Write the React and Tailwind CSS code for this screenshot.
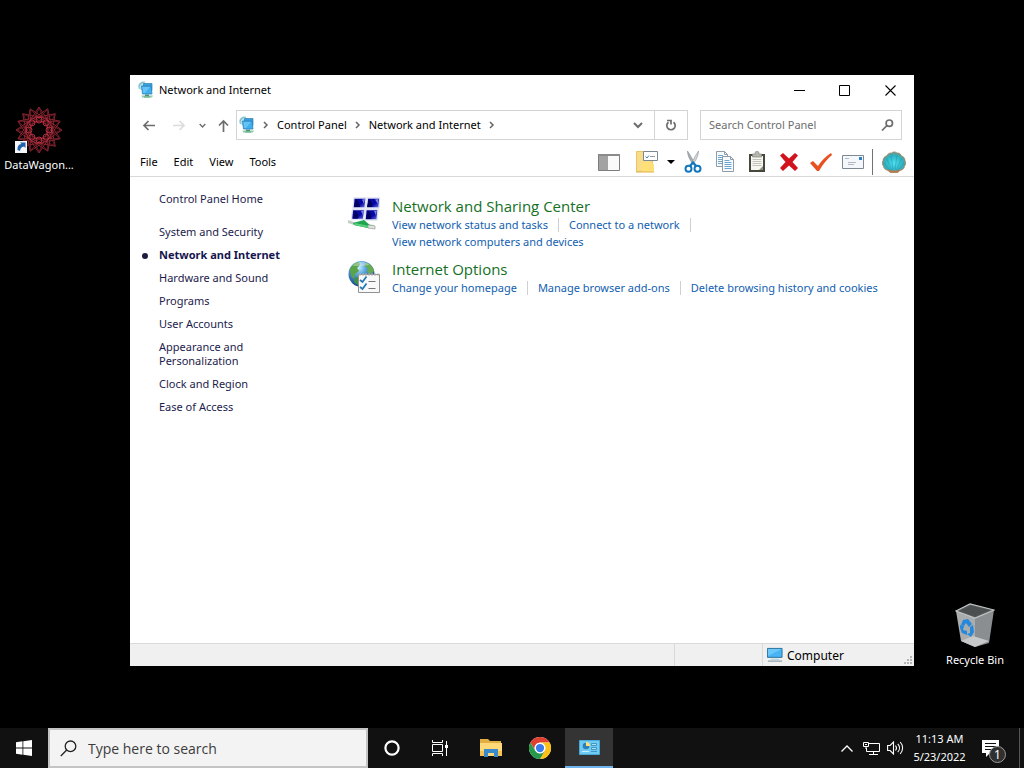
import React from "react";

const categories = [
  "System and Security",
  "Network and Internet",
  "Hardware and Sound",
  "Programs",
  "User Accounts",
  "Appearance and Personalization",
  "Clock and Region",
  "Ease of Access",
];

const sections = [
  {
    title: "Network and Sharing Center",
    icon: <NetworkCenterIcon />,
    rows: [
      ["View network status and tasks", "Connect to a network", ""],
      ["View network computers and devices"],
    ],
  },
  {
    title: "Internet Options",
    icon: <InternetOptionsIcon />,
    rows: [["Change your homepage", "Manage browser add-ons", "Delete browsing history and cookies"]],
  },
];

function NetworkIcon() {
  return (
    <svg width="16" height="18" viewBox="0 0 16 18" className="shrink-0" aria-hidden="true">
      <circle cx="4.500" cy="5" r="4.300" fill="#b5dfeb" />
      <path d="M1 5c1-3 3-4 6-4M1.500 8c-1-2 0-5 3-7" stroke="#6fb2c4" strokeWidth=".8" fill="none" />
      <path d="M5.500 2.500h8.500v7h-8.500z" fill="#3a9fdb" stroke="#2980b5" strokeWidth=".7" />
      <path d="M3.500 5h9.500l1 8H4.500z" fill="#3eaeee" stroke="#2c83b7" strokeWidth=".8" />
      <path d="M4.500 6H12l-5 6H5.200z" fill="#66c3f6" />
      <path d="M3.500 14.500H15l-1 2H4z" fill="#8fceae" />
      <path d="M7 13.500h4v1.500H7z" fill="#4f8d80" />
      <path d="M6 15.500h6v1H6z" fill="#5aa67d" />
    </svg>
  );
}

function NetworkCenterIcon() {
  return (
    <svg width="34" height="34" viewBox="0 0 34 34" aria-hidden="true">
      <defs>
        <linearGradient id="screen" x1="0" y1="0" x2="1" y2="1">
          <stop offset="0" stopColor="#0a0a8e" />
          <stop offset=".6" stopColor="#0707a8" />
          <stop offset="1" stopColor="#7d86e8" />
        </linearGradient>
      </defs>
      <g stroke="#dfe3f2" strokeWidth="1.300">
        <path d="M6 1h12l-1 10H5z" fill="url(#screen)" />
        <path d="M19.500 1h12l-.5 10H18.500z" fill="url(#screen)" />
        <path d="M4.500 12.500h12l-1 10h-12z" fill="url(#screen)" />
        <path d="M18 12.500h12l-1 10.500H17z" fill="url(#screen)" />
      </g>
      <path d="M8 2l3 4 1 4H6zM21 2l3 4v4h-5zM7 13.500l3 4v4H5zM20 13.500l3 4v4.500h-5z" fill="#00005f" />
      <path d="M14 2.500l3-.5-1 5zM27 2.500l3-.5v5zM13 14l3-.5-1 5zM26 14l3-.5-1 5z" fill="#7983e6" />
      <path d="M0 23l6 2 20 3v4l-7-1-13-3-6-2z" fill="#c4cdc7" />
      <path d="M5 26l11-3 7 6-3 2-14-3z" fill="#1fa44f" />
      <path d="M7 26l14 3v2L6 28z" fill="#58cf7d" />
      <path d="M20 28l7 1v3l-7-1z" fill="#e2e5e3" stroke="#92a098" strokeWidth=".7" />
    </svg>
  );
}

function InternetOptionsIcon() {
  return (
    <svg width="34" height="34" viewBox="0 0 34 34" aria-hidden="true">
      <defs>
        <radialGradient id="globe" cx=".4" cy=".25" r=".75">
          <stop offset="0" stopColor="#c7edff" />
          <stop offset=".35" stopColor="#5aa7dc" />
          <stop offset="1" stopColor="#153f88" />
        </radialGradient>
      </defs>
      <circle cx="13.500" cy="14" r="13" fill="url(#globe)" />
      <path d="M2 9c3-5 6-7 9-7l1 3-3 3 2 3-4 3-1 5-3-3z" fill="#5aa346" />
      <path d="M17 3c4 0 8 3 9 8l-3 3-4-2 1-4-3-1z" fill="#66ab50" />
      <path d="M7 17l6 1 1 8c-3 0-6-2-8-4z" fill="#3f9146" />
      <path d="M4.500 6c4-5 12-6 17-1-5 1-12 1-17 1z" fill="#fff" opacity=".35" />
      <path d="M10.500 14.500h21v18h-21z" fill="#f9f9f9" stroke="#929292" />
      <path d="M12 13v3M15 13v3M18 13v3M21 13v3M24 13v3M27 13v3M30 13v3" stroke="#b5b5b5" />
      <path d="M12 20l2.500 2 4-5.500M12 27l2.500 2 4-5.500" fill="none" stroke="#2479b5" strokeWidth="1.800" />
      <path d="M20.500 21.500h7M20.500 28.500h7" stroke="#777" />
    </svg>
  );
}

function PaneIcon() {
  return (
    <svg width="22" height="17" viewBox="0 0 22 17" aria-hidden="true">
      <path d="M.5.500h21v16H.5z" fill="#fafafa" stroke="#7d7d7d" />
      <path d="M1 1h9v15H1z" fill="#a3a3a3" />
      <path d="M0 1h22" stroke="#8a8a8a" strokeWidth="2" />
    </svg>
  );
}

function FolderOptionsIcon() {
  return (
    <svg width="22" height="22" viewBox="0 0 22 22" aria-hidden="true">
      <path d="M.5.500h7l1 2h8v18H.5z" fill="#f7dc8b" stroke="#e9c563" />
      <path d="M5.500 11h10l2.500 2.500V21h-12.500z" fill="#ffdf78" />
      <path d="M0 21h18" stroke="#dfb24a" />
      <path d="M7.500.500h14v9h-14z" fill="#fff" stroke="#7c8790" />
      <path d="M9.500 5.500l1.500 1.500L13 4.500" stroke="#3d86be" fill="none" />
      <path d="M14 5.500h5" stroke="#999" />
    </svg>
  );
}

function CutIcon() {
  return (
    <svg width="18" height="22" viewBox="0 0 18 22" aria-hidden="true">
      <path d="M3.500 0c0 4 2 9 5.500 13l1-2C8 7 6 4 3.500 0z" fill="#a7adb2" stroke="#858c92" strokeWidth=".6" />
      <path d="M14.500 0c0 4-2 9-5.500 13l-1-2c2-4 4-7 6.500-11z" fill="#d2d6d9" stroke="#8d9499" strokeWidth=".6" />
      <ellipse cx="4.500" cy="17.800" rx="3" ry="3" fill="none" stroke="#1477bd" strokeWidth="2" />
      <ellipse cx="13.500" cy="17.800" rx="3" ry="3" fill="none" stroke="#1477bd" strokeWidth="2" />
      <path d="M5.500 15.500L9 11.500l3.500 4" fill="none" stroke="#1477bd" strokeWidth="2.400" />
    </svg>
  );
}

function CopyIcon() {
  return (
    <svg width="20" height="22" viewBox="0 0 20 22" aria-hidden="true">
      <g fill="#f8fbfd" stroke="#8f9ca7">
        <path d="M1.500.500h8l3 3v12h-11z" />
        <path d="M7.500 5.500h8l3 3v12h-11z" />
      </g>
      <path d="M9.500.500v3h3M15.500 5.500v3h3" fill="none" stroke="#8f9ca7" />
      <path d="M3 4.500h5M3 6.500h4M3 8.500h4M3 10.500h4M3 12.500h4M9.500 9.500h5M9.500 11.500h7M9.500 13.500h7M9.500 15.500h7M9.500 17.500h7" stroke="#6ba5d2" />
    </svg>
  );
}

function PasteIcon() {
  return (
    <svg width="18" height="22" viewBox="0 0 18 22" aria-hidden="true">
      <path d="M1 3h16v18H1z" fill="#48473c" />
      <path d="M3 5h12v14H3z" fill="#f7f7f2" />
      <path d="M4.500 3H7c0-4 4-4 4 0h2.500v3h-9z" fill="#b5b6ae" stroke="#85867e" strokeWidth=".7" />
      <path d="M4.500 8.500h9M4.500 10.500h9M4.500 12.500h9M4.500 14.500h9" stroke="#c4c4bc" />
      <path d="M11 19l4-4v4z" fill="#8d8d83" />
    </svg>
  );
}

function DeleteIcon() {
  return (
    <svg width="20" height="20" viewBox="0 0 20 20" aria-hidden="true">
      <path d="M1 3.500L4 1l6 5.500L16 1l3 2.500-5.500 6.500 5.500 6-3 3-6-5.500L4 19l-3-3 5.500-6z" fill="#d2131d" />
    </svg>
  );
}

function CheckIcon() {
  return (
    <svg width="22" height="18" viewBox="0 0 22 18" aria-hidden="true">
      <path d="M0 10l3-2 5 5C11 8 15 4 21 0l1 2C17 6 13 11 9 18H7z" fill="#e8501f" />
    </svg>
  );
}

function MailIcon() {
  return (
    <svg width="22" height="14" viewBox="0 0 22 14" aria-hidden="true">
      <path d="M.5.500h21v13H.5z" fill="#f5f8fa" stroke="#7d8992" />
      <path d="M3 3.500h4M6 7.500h8M6 9.500h6" stroke="#b0bac2" />
      <path d="M17 2h3v3h-3z" fill="#2d83c5" />
    </svg>
  );
}

function ShellIcon() {
  return (
    <svg width="24" height="22" viewBox="0 0 24 22" aria-hidden="true">
      <defs>
        <radialGradient id="shell" cx=".5" cy=".55" r=".6">
          <stop offset="0" stopColor="#4fe0f2" />
          <stop offset=".6" stopColor="#2fb4c4" />
          <stop offset=".85" stopColor="#5f9c93" />
          <stop offset="1" stopColor="#b07a4c" />
        </radialGradient>
      </defs>
      <path d="M6 19.500C3 19 1.500 17 1.500 15 0 14-.2 11 1 9.500 1 7 2.500 5.500 4.500 5 5.500 3 7.500 1.500 9.500 2 11 .5 13.500.5 15 2c2-.3 4 1 4.500 3 2 .5 3.500 2 3.500 4.500 1.200 1.500 1 4.500-.5 5.500 0 2-1.500 4-4.500 4.500l-2.500 2h-7z" fill="url(#shell)" stroke="#b08059" strokeWidth=".7" />
      <path d="M11 19L9 4M13 19l2-15M9.500 19L4.500 7M14.500 19l5-12M8 19l-6-7M16 19l6-7" stroke="#1b93a6" strokeWidth=".8" opacity=".55" />
      <path d="M5 18l3 3.500h8l3-3.500-4 1.500H9z" fill="#b87a4a" />
    </svg>
  );
}

function Arrow({ direction }) {
  const paths = {
    left: "M13 6.500H2M6.500 2L2 6.500 6.500 11",
    right: "M0 6.500h11M6.500 2L11 6.500 6.500 11",
    up: "M6.500 13V2M2 6.500L6.500 2 11 6.500",
  };
  return (
    <svg width="13" height="13" viewBox="0 0 13 13" fill="none" stroke="currentColor" strokeWidth="1.700" aria-hidden="true">
      <path d={paths[direction]} />
    </svg>
  );
}

function ChevronDown({ size }) {
  return (
    <svg width={size} height={size} viewBox="0 0 10 10" fill="none" stroke="currentColor" strokeWidth="2" aria-hidden="true">
      <path d="M1 3l4 4 4-4" />
    </svg>
  );
}

function ChevronRight() {
  return (
    <svg width="6" height="8" viewBox="0 0 6 8" fill="none" stroke="#666" strokeWidth="1.500" className="shrink-0" aria-hidden="true">
      <path d="M1 1l3 3-3 3" />
    </svg>
  );
}

const tools = [
  ["Cut", CutIcon],
  ["Copy", CopyIcon],
  ["Paste", PasteIcon],
  ["Delete", DeleteIcon],
  ["Properties", CheckIcon],
  ["E-mail", MailIcon],
];

function ControlPanelWindow() {
  return (
    <section className="absolute top-[75px] right-[110px] bottom-[62px] left-[130px] flex flex-col bg-white text-[11px] text-black">
      <header className="flex h-[30px] shrink-0 items-center pl-2">
        <NetworkIcon />
        <h1 className="ml-[5px] flex-1">Network and Internet</h1>
        <button aria-label="Minimize" className="flex h-full w-[45px] items-center justify-center">
          <svg width="11" height="11" stroke="#000" aria-hidden="true"><path d="M0 5.500h11" /></svg>
        </button>
        <button aria-label="Maximize" className="flex h-full w-[45px] items-center justify-center">
          <svg width="11" height="11" fill="none" stroke="#000" aria-hidden="true"><path d="M.5.500h10v10H.5z" /></svg>
        </button>
        <button aria-label="Close" className="flex h-full w-[47px] items-center justify-center">
          <svg width="11" height="11" stroke="#000" strokeWidth="1.100" aria-hidden="true"><path d="M.5.500l10 10M10.500.500l-10 10" /></svg>
        </button>
      </header>

      <div className="mt-[5px] flex h-[30px] shrink-0 items-stretch pr-3">
        <nav aria-label="History" className="flex w-[106px] shrink-0 items-center pl-3 text-[#6d6d6d]">
          <button aria-label="Back" className="flex w-[31px]"><Arrow direction="left" /></button>
          <button aria-label="Forward" className="flex w-[26px] text-[#dcdcdc]"><Arrow direction="right" /></button>
          <button aria-label="Recent locations" className="flex w-[18px]"><ChevronDown size="7" /></button>
          <button aria-label="Up" className="flex"><Arrow direction="up" /></button>
        </nav>
        <div className="flex flex-1 items-center border border-[#d4d4d4] pl-[2px]">
          <NetworkIcon />
          <span className="ml-2 flex items-center"><ChevronRight /></span>
          <button className="ml-2">Control Panel</button>
          <span className="mx-2 flex items-center"><ChevronRight /></span>
          <button>Network and Internet</button>
          <span className="ml-2 flex items-center"><ChevronRight /></span>
          <button aria-label="Previous locations" className="ml-auto flex h-full w-8 items-center justify-center text-[#6d6d6d]">
            <ChevronDown size="10" />
          </button>
          <button aria-label="Refresh" className="flex h-full w-[33px] items-center justify-center border-l border-[#d4d4d4]">
            <svg width="12" height="12" viewBox="0 0 12 12" fill="none" stroke="#6d6d6d" strokeWidth="1.700" aria-hidden="true">
              <path d="M8.500 3.200A4.200 4.200 0 1 1 3.500 3.200" />
              <path d="M2 1.500h4v4" />
            </svg>
          </button>
        </div>
        <label className="ml-3 flex w-[202px] shrink-0 items-center border border-[#d4d4d4] pr-[7px] pl-2">
          <input type="text" aria-label="Search Control Panel" placeholder="Search Control Panel" className="min-w-0 flex-1 outline-none placeholder:text-[#6d6d6d]" />
          <svg width="13" height="12" viewBox="0 0 13 12" fill="none" stroke="#6d6d6d" strokeWidth="1.700" aria-hidden="true">
            <circle cx="8.300" cy="4.200" r="3.200" />
            <path d="M6 6.500L1 11.500" />
          </svg>
        </label>
      </div>

      <div className="mt-2 flex h-[29px] shrink-0 items-center border-b border-[#d9d9d9] pl-[10px]">
        <div className="flex flex-1 gap-4">
          <button>File</button>
          <button>Edit</button>
          <button>View</button>
          <button>Tools</button>
        </div>
        <button aria-label="Navigation pane" className="mr-1 flex w-8 justify-center"><PaneIcon /></button>
        <button aria-label="Folder options" className="flex w-9 justify-center"><FolderOptionsIcon /></button>
        <button aria-label="More options" className="flex w-3 justify-center">
          <svg width="8" height="4" aria-hidden="true"><path d="M0 0h8L4 4z" /></svg>
        </button>
        {tools.map(([name, Icon]) => (
          <button key={name} aria-label={name} className="flex w-8 justify-center"><Icon /></button>
        ))}
        <div className="ml-[3px] h-[26px] w-px bg-[#737373]" />
        <button aria-label="Classic shell" className="flex w-[41px] justify-center"><ShellIcon /></button>
      </div>

      <div className="flex min-h-0 flex-1">
        <aside className="w-[218px] shrink-0 pt-[15px] pl-[29px] leading-[14px] text-[#1c1c4c]">
          <a href="#home">Control Panel Home</a>
          <ul className="mt-[19px] flex w-[140px] flex-col gap-[9px]">
            {categories.map((name) => (
              <li key={name} className="relative">
                {name === "Network and Internet" ? (
                  <>
                    <span className="absolute top-[5px] -left-[17px] size-[6px] rounded-full bg-[#1c1c3c]" />
                    <a href="#network" aria-current="page" className="block font-bold text-[#151550]">{name}</a>
                  </>
                ) : (
                  <a href="#category" className="block max-w-[125px]">{name}</a>
                )}
              </li>
            ))}
          </ul>
        </aside>
        <main className="flex flex-1 flex-col gap-[9px] pt-[19px]">
          {sections.map((section) => (
            <section key={section.title} className="flex items-start">
              <div className="mt-[1px] w-[44px] shrink-0">{section.icon}</div>
              <div>
                <h2 className="font-['Open_Sans',sans-serif] text-[15px] leading-5 text-[#15701f]"><a href="#section">{section.title}</a></h2>
                {section.rows.map((row) => (
                  <div key={row[0]} className="flex items-center leading-[17px] whitespace-nowrap text-[#1260b0]">
                    {row.map((text, i) => (
                      <React.Fragment key={text}>
                        {i > 0 && <span className="mx-[10px] h-[14px] w-px bg-[#cfcfcf]" />}
                        {text && <a href="#task">{text}</a>}
                      </React.Fragment>
                    ))}
                  </div>
                ))}
              </div>
            </section>
          ))}
        </main>
      </div>

      <footer className="flex h-[23px] shrink-0 items-stretch border-t border-[#d9d9d9] bg-[#f0f0f0]">
        <div className="flex-1" />
        <div className="w-[88px] border-l border-[#d9d9d9]" />
        <div className="flex w-[152px] items-center gap-1 border-l border-[#d9d9d9] pl-1">
          <svg width="16" height="16" viewBox="0 0 17 16" aria-hidden="true">
            <path d="M.5 1h15.500v9.500H.5z" fill="#48b4f3" stroke="#246f9c" />
            <path d="M1 1.500h14.500L1 9z" fill="#6dc8fa" />
            <path d="M4 12.500h9" stroke="#a5c7d8" />
            <path d="M1 14.500h15" stroke="#708a98" />
          </svg>
          <span className="pt-[2px] text-[12px]">Computer</span>
          <svg width="9" height="9" fill="#b5b5b5" className="mr-[1px] mb-px ml-auto self-end" aria-hidden="true">
            <path d="M6 0h2v2H6zM3 3h2v2H3zM6 3h2v2H6zM0 6h2v2H0zM3 6h2v2H3zM6 6h2v2H6z" />
          </svg>
        </div>
      </footer>
    </section>
  );
}

function WagonIcon() {
  const point = (k, r) => {
    const a = (k * Math.PI) / 8;
    return `${(24 + r * Math.cos(a)).toFixed(1)},${(24 + r * Math.sin(a)).toFixed(1)}`;
  };
  const ring = (r, step) =>
    Array.from({ length: 16 }, (_, k) => `M${point(k, r)}L${point(k + step, r)}`).join("");
  return (
    <svg width="48" height="48" viewBox="0 0 48 48" fill="none" aria-hidden="true">
      <path d={ring(23, 5)} stroke="#a82c3b" strokeWidth=".8" />
      <path d={ring(22, 6)} stroke="#8f2532" strokeWidth=".7" />
      {[0, 1, 2, 3, 4, 5, 6, 7].map((k) => {
        const a = (k * Math.PI) / 4;
        return <circle key={k} cx={24 + 10 * Math.cos(a)} cy={24 + 10 * Math.sin(a)} r="3" stroke="#c63447" strokeWidth=".9" />;
      })}
      <circle cx="24" cy="24" r="5" fill="#050000" />
      <path d="M0 35h12v12H0z" fill="#f4f6f8" />
      <path d="M2.500 44c0-4 1-5.500 4-6L5 36.500h5.500V42L9 40.500C6.500 41 5.500 42 5 45z" fill="#2262ac" />
    </svg>
  );
}

function RecycleIcon() {
  return (
    <svg width="40" height="46" viewBox="0 0 40 46" aria-hidden="true">
      <path d="M1 8l19 7v29L6 38z" fill="#a9adae" />
      <path d="M20 15l19-8-5 33-14 4z" fill="#8b8e90" />
      <path d="M6 38l12-5 16 5-14 6z" fill="#c6c8c9" />
      <path d="M1 8L15 1l24 6-19 8z" fill="#555859" stroke="#c4c7c8" strokeWidth="1.200" />
      <path d="M5 8l11-5 18 4-14 6z" fill="#4c4f50" />
      <g fill="#2588dc">
        <path d="M8 17l5-1 4 5-3 3-3-4-2 3-3-1z" />
        <path d="M5 22l4 1-1 4 4 1v4l-5-2-2-5z" />
        <path d="M15 24l3-2 1 7-3 5-4-3 3-1z" />
      </g>
    </svg>
  );
}

function Taskbar() {
  return (
    <footer className="flex h-10 shrink-0 items-stretch bg-[#111111] text-white">
      <button aria-label="Start" className="flex w-12 items-center justify-center">
        <svg width="16" height="16" viewBox="0 0 16 16" fill="#fff" aria-hidden="true">
          <path d="M0 2.200L6.500 1.300V7.600H0zM7.300 1.200L16 0v7.600H7.300zM0 8.400h6.500v6.300L0 13.800zM7.300 8.400H16V16l-8.700-1.200z" />
        </svg>
      </button>
      <label className="flex w-80 items-center border-2 border-[#c4c4c4] bg-[#f3f3f3] pl-[10px]">
        <svg width="17" height="17" viewBox="0 0 17 17" fill="none" stroke="#222" strokeWidth="1.300" aria-hidden="true">
          <circle cx="10.500" cy="6.300" r="5.300" />
          <path d="M6.700 10L.8 16" />
        </svg>
        <input type="text" aria-label="Type here to search" placeholder="Type here to search" className="ml-[11px] min-w-0 flex-1 font-['Open_Sans',sans-serif] text-[14px] outline-none placeholder:text-[#3c3c3c]" />
      </label>
      <button aria-label="Cortana" className="flex w-12 items-center justify-center">
        <svg width="16" height="16" fill="none" stroke="#fff" strokeWidth="2.200" aria-hidden="true"><circle cx="8" cy="8" r="6.600" /></svg>
      </button>
      <button aria-label="Task View" className="flex w-12 items-center justify-center">
        <svg width="18" height="16" viewBox="0 0 18 16" fill="none" stroke="#fff" aria-hidden="true">
          <path d="M1.500 0v2.500h10V0M1.500 16v-2.500h10V16M1.500 4.500h10v7h-10zM15.500 1v4M15.500 8v8" />
          <path d="M14 5h3v3h-3z" fill="#fff" stroke="none" />
        </svg>
      </button>
      <button aria-label="File Explorer" className="ml-[3px] flex w-12 items-center justify-center">
        <svg width="22" height="18" viewBox="0 0 22 18" aria-hidden="true">
          <path d="M0 0h8l2 2h11v4H0z" fill="#e0ae42" />
          <path d="M0 4h22v13H0z" fill="#ffd978" />
          <path d="M0 12h4v5H0zM18 12h4v5h-4z" fill="#f4c255" />
          <path d="M4 10h14v8h-4v-4H8v4H4z" fill="#3989cb" />
        </svg>
      </button>
      <button aria-label="Chrome" className="flex w-[50px] items-center justify-center">
        <svg width="22" height="22" viewBox="0 0 48 48" aria-hidden="true">
          <circle cx="24" cy="24" r="24" fill="#fff" />
          <path d="M24 12h20.800A24 24 0 0 0 3.200 12l10.400 18A12 12 0 0 1 24 12z" fill="#df4032" />
          <path d="M34.400 30L24 48A24 24 0 0 0 44.800 12H24a12 12 0 0 1 10.400 18z" fill="#fbc116" />
          <path d="M13.600 30L3.200 12A24 24 0 0 0 24 48l10.400-18a12 12 0 0 1-20.800 0z" fill="#27994b" />
          <circle cx="24" cy="24" r="11.500" fill="#fff" />
          <circle cx="24" cy="24" r="9" fill="#3b7ced" />
        </svg>
      </button>
      <button aria-label="Control Panel" className="flex w-12 items-center justify-center border-b-2 border-[#70b5ed] bg-[#343434]">
        <svg width="21" height="15" viewBox="0 0 21 15" aria-hidden="true">
          <path d="M.5.500h20v14H.5z" fill="#6fcbf3" stroke="#4ba9d9" />
          <circle cx="7" cy="6" r="3.300" fill="#2c80b6" />
          <path d="M7 6V2a4 4 0 0 1 4 4z" fill="#ffe178" />
          <path d="M12.500 3.500h5v2h-5zM12.500 7.500h5v2h-5z" fill="#a6e1f8" stroke="#3288b9" strokeWidth=".8" />
          <path d="M3 11.500h7" stroke="#c9f0fc" />
          <path d="M12 11.500h6" stroke="#4292bf" />
        </svg>
      </button>
      <div className="ml-auto flex items-center">
        <button aria-label="Show hidden icons" className="flex w-6 justify-center">
          <svg width="12" height="7" fill="none" stroke="#fff" strokeWidth="1.300" aria-hidden="true"><path d="M.5 6.500L6 1l5.500 5.500" /></svg>
        </button>
        <button aria-label="Network" className="flex w-6 justify-center">
          <svg width="17" height="15" viewBox="0 0 17 15" fill="none" stroke="#fff" aria-hidden="true">
            <path d="M6 2.500h10.500v8H3.500V7M10.500 10.500v3M6 13.500h9M.5 1.500h5v4h-5zM3 5.500V8" />
            <path d="M2 3.500h2" />
          </svg>
        </button>
        <button aria-label="Volume" className="flex w-6 justify-center">
          <svg width="17" height="14" viewBox="0 0 17 14" fill="none" stroke="#fff" strokeWidth="1.100" aria-hidden="true">
            <path d="M.6 4.500h2.500L6.500 1v12L3.100 9.500H.6z" />
            <path d="M8.500 4.500c1.200 1.500 1.200 3.500 0 5M10.800 2.800c2.200 2.500 2.200 6 0 8.400M13.200 1c3.200 3.500 3.200 8.500 0 12" />
          </svg>
        </button>
        <button className="w-[65px] text-center text-[11px] leading-[18px] whitespace-nowrap">
          11:13 AM<br />5/23/2022
        </button>
        <button aria-label="Notifications, 1 new" className="relative ml-[5px] flex h-full w-[37px] items-center pl-[5px]">
          <svg width="17" height="17" viewBox="0 0 17 17" aria-hidden="true">
            <path d="M0 0h17v13H8l-4 4v-4H0z" fill="#fff" />
            <path d="M3 3.500h11M3 6.500h11M3 9.500h8" stroke="#111" />
          </svg>
          <span className="absolute top-[18px] left-[12px] flex size-[17px] items-center justify-center rounded-full border border-[#9a9a9a] bg-[#303030] text-[12px] leading-none">1</span>
        </button>
        <div className="ml-[5px] h-full w-[5px] border-l border-[#555]" />
      </div>
    </footer>
  );
}

export default function App() {
  return (
    <div className="flex h-screen flex-col overflow-hidden bg-black font-['Noto_Sans','Open_Sans',sans-serif]">
      <div className="relative flex-1">
        <button className="absolute top-[106px] left-0 flex w-[78px] flex-col items-center text-[11px] leading-[18px] text-white">
          <WagonIcon />
          <span className="mt-[2px]">DataWagon...</span>
        </button>
        <button className="absolute right-[10px] bottom-[59px] flex w-[78px] flex-col items-center text-[11px] leading-[18px] text-white">
          <RecycleIcon />
          <span className="mt-[2px] whitespace-nowrap">Recycle Bin</span>
        </button>
        <ControlPanelWindow />
      </div>
      <Taskbar />
    </div>
  );
}
